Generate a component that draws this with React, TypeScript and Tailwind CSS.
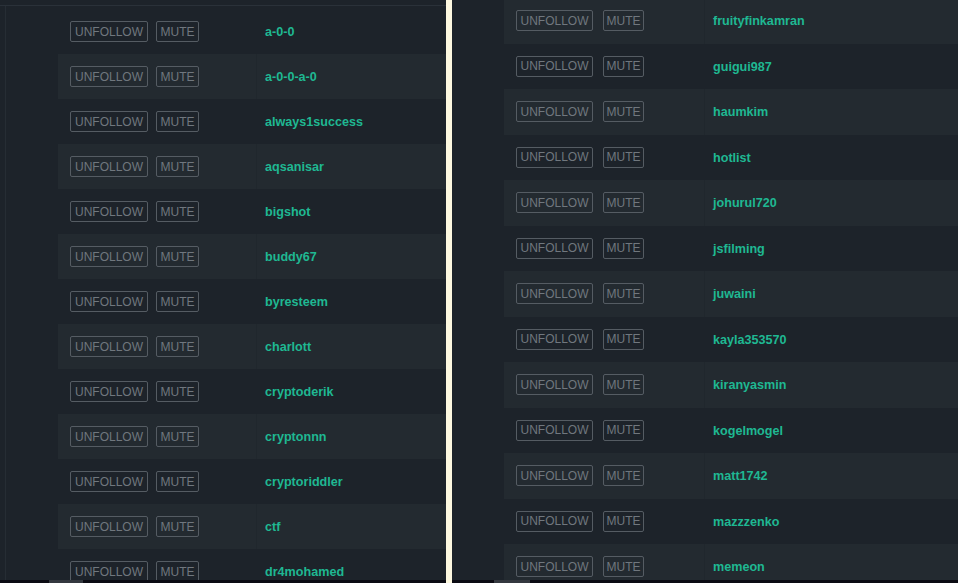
import React from "react";

const leftNames = [
  "a-0-0",
  "a-0-0-a-0",
  "always1success",
  "aqsanisar",
  "bigshot",
  "buddy67",
  "byresteem",
  "charlott",
  "cryptoderik",
  "cryptonnn",
  "cryptoriddler",
  "ctf",
  "dr4mohamed",
];

const rightNames = [
  "fruityfinkamran",
  "guigui987",
  "haumkim",
  "hotlist",
  "johurul720",
  "jsfilming",
  "juwaini",
  "kayla353570",
  "kiranyasmin",
  "kogelmogel",
  "matt1742",
  "mazzzenko",
  "memeon",
];

function Btn({ label, w }: { label: string; w: string }) {
  return (
    <span
      className={`${w} flex h-[21px] items-center justify-center rounded-[2px] border border-[#555c63] text-[12px] leading-none text-[#70777e]`}
    >
      {label}
    </span>
  );
}

function Row({ name, light, right }: { name: string; light: boolean; right?: boolean }) {
  return (
    <div className={`flex items-center ${right ? "h-[45.5px]" : "h-[45px]"} ${light ? "bg-[#232a30]" : ""}`}>
      <div className={`flex h-full items-center pl-[12px] ${right ? "w-[200px] gap-[10px]" : "w-[198px] gap-[8px]"}`}>
        <Btn label="UNFOLLOW" w={right ? "w-[77px]" : "w-[78px]"} />
        <Btn label="MUTE" w={right ? "w-[41px]" : "w-[43px]"} />
      </div>
      <div
        className={`flex h-full flex-1 items-center border-l pl-[8px] pt-[2px] ${
          light ? "border-[#20272d]" : "border-transparent"
        }`}
      >
        <span className="text-[12.6px] font-bold text-[#1fb892]">{name}</span>
      </div>
    </div>
  );
}

export default function App() {
  return (
    <div
      className="flex h-[583px] w-[958px] overflow-hidden bg-[#1d232a]"
      style={{ fontFamily: '"Liberation Sans", Arial, sans-serif' }}
    >
      <div className="flex w-[446px] flex-col">
        <div className="mt-[5px] flex-1 overflow-hidden border-t border-[#2a3139]">
          <div className="ml-[5px] h-full border-l border-[#262d34] pl-[52px] pt-[3px]">
            {leftNames.map((n, i) => (
              <Row key={n} name={n} light={i % 2 === 1} />
            ))}
          </div>
        </div>
        <div className="flex h-[3px] bg-[#0b0b13]">
          <div className="ml-[49px] w-[34px] bg-[#34383f]" />
        </div>
      </div>
      <div className="w-[6px] bg-[#fdf8e0]" />
      <div className="flex w-[506px] flex-col">
        <div className="flex-1 overflow-hidden pl-[52px]">
          <div className="-mt-[2px]">
            {rightNames.map((n, i) => (
              <Row key={n} name={n} light={i % 2 === 0} right />
            ))}
          </div>
        </div>
        <div className="flex h-[3px] bg-[#0b0b13]">
          <div className="ml-[42px] w-[36px] bg-[#34383f]" />
        </div>
      </div>
    </div>
  );
}
